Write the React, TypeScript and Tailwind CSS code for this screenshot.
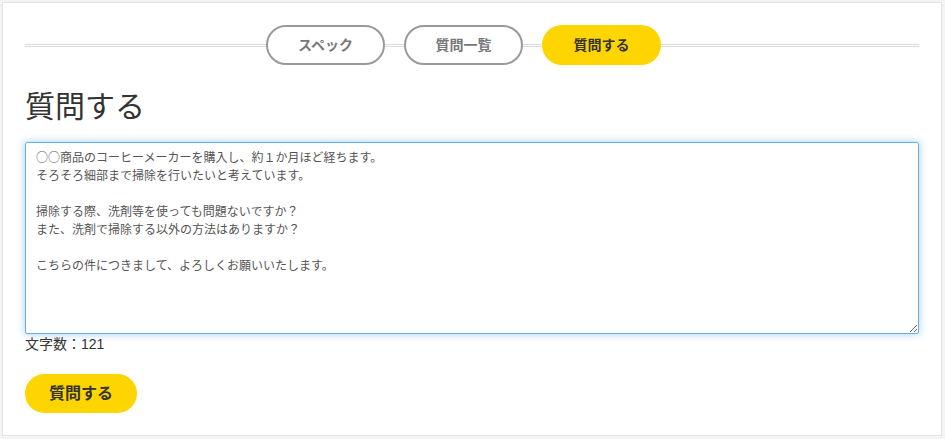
import { useState } from "react";

const tabs = [
  { name: "スペック", active: false },
  { name: "質問一覧", active: false },
  { name: "質問する", active: true },
];

const initialText =
  "○○商品のコーヒーメーカーを購入し、約１か月ほど経ちます。\nそろそろ細部まで掃除を行いたいと考えています。\n\n掃除する際、洗剤等を使っても問題ないですか？\nまた、洗剤で掃除する以外の方法はありますか？\n\nこちらの件につきまして、よろしくお願いいたします。";

const App = () => {
  const [text, setText] = useState(initialText);

  return (
    <div
      className="min-h-screen w-[945px] bg-[#f4f4f4] pt-[2px] pl-[2px]"
      style={{ fontFamily: '"Liberation Sans", "Noto Sans CJK JP", sans-serif' }}
    >
      <div className="w-[940px] h-[434px] bg-white border border-[#e3e3e3] px-[22px] pt-[22px]">
        {/* Tabs */}
        <div className="relative">
          <div className="absolute inset-x-0 top-[19px] h-[3px] border-y border-[#dcdcdc]" />
          <div className="relative flex justify-center gap-[19px] pr-[17px]">
            {tabs.map((tab) => (
              <div
                key={tab.name}
                className={`flex h-[40px] w-[119px] items-center justify-center rounded-full text-[14px] font-bold ${
                  tab.active
                    ? "bg-[#ffd500] text-[#333]"
                    : "border-2 border-[#9a9a9a] bg-white text-[#777]"
                }`}
              >
                {tab.name}
              </div>
            ))}
          </div>
        </div>

        <h1 className="mt-[22px] text-[30px] leading-[40px] text-[#333]">質問する</h1>

        <textarea
          value={text}
          onChange={(e) => setText(e.target.value)}
          className="mt-[15px] block h-[192px] w-[894px] rounded-[2px] border border-[#66afe9] px-[10px] py-[5px] font-['Noto_Sans_CJK_JP',sans-serif] text-[12px] leading-[18px] text-[#555] shadow-[0_0_8px_rgba(102,175,233,0.6)] outline-none"
        />
        <p className="mt-[1px] text-[14px] leading-[18px] text-[#333]">
          文字数：{text.replace(/\n/g, "").length}
        </p>

        <button className="mt-[21px] flex h-[39px] w-[112px] items-center justify-center rounded-full bg-[#ffd500] text-[16px] font-bold text-[#333]">
          質問する
        </button>
      </div>
    </div>
  );
};

export default App;
